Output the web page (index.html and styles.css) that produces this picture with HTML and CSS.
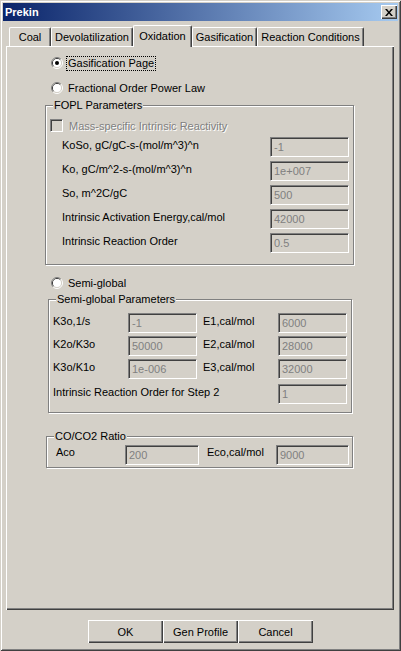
FILE: index.html
```html
<!DOCTYPE html>
<html>
<head>
<meta charset="utf-8">
<link rel="stylesheet" href="styles.css">
</head>
<body>
<div class="window">
  <div class="titlebar">
    <span class="title">Prekin</span>
    <span class="close"><svg width="8" height="7" viewBox="0 0 8 7"><path d="M0 0h2l2 2.4 2-2.4h2L5 3.5 8 7H6L4 4.6 2 7H0l3-3.5z" fill="#000"/></svg></span>
  </div>
  <div class="tabs">
    <div class="tab w-coal">Coal</div>
    <div class="tab w-devol">Devolatilization</div>
    <div class="tab active w-oxid">Oxidation</div>
    <div class="tab w-gasif">Gasification</div>
    <div class="tab w-react">Reaction Conditions</div>
  </div>
  <div class="panel">
    <div class="radio-row">
      <svg class="radio" width="12" height="12" viewBox="0 0 12 12">
        <path d="M2.11 9.89A5.5 5.5 0 0 1 9.89 2.11" fill="none" stroke="#808080"/>
        <path d="M9.89 2.11A5.5 5.5 0 0 1 2.11 9.89" fill="none" stroke="#fff"/>
        <path d="M2.82 9.18A4.5 4.5 0 0 1 9.18 2.82" fill="none" stroke="#404040"/>
        <path d="M9.18 2.82A4.5 4.5 0 0 1 2.82 9.18" fill="none" stroke="#D4D0C8"/>
        <circle cx="6" cy="6" r="4" fill="#fff"/>
        <circle cx="6" cy="6" r="2" fill="#000"/>
      </svg>
      <span class="rlabel focus">Gasification Page</span>
    </div>
    <div class="radio-row gap9">
      <svg class="radio" width="12" height="12" viewBox="0 0 12 12">
        <path d="M2.11 9.89A5.5 5.5 0 0 1 9.89 2.11" fill="none" stroke="#808080"/>
        <path d="M9.89 2.11A5.5 5.5 0 0 1 2.11 9.89" fill="none" stroke="#fff"/>
        <path d="M2.82 9.18A4.5 4.5 0 0 1 9.18 2.82" fill="none" stroke="#404040"/>
        <path d="M9.18 2.82A4.5 4.5 0 0 1 2.82 9.18" fill="none" stroke="#D4D0C8"/>
        <circle cx="6" cy="6" r="4" fill="#fff"/>
      </svg>
      <span class="rlabel">Fractional Order Power Law</span>
    </div>

    <div class="group fopl">
      <span class="gtitle">FOPL Parameters</span>
      <div class="check-row">
        <span class="checkbox"></span>
        <span class="disabled-text">Mass-specific Intrinsic Reactivity</span>
      </div>
      <div class="prow first"><span class="plabel">KoSo, gC/gC-s-(mol/m^3)^n</span><span class="field fw79">-1</span></div>
      <div class="prow"><span class="plabel">Ko, gC/m^2-s-(mol/m^3)^n</span><span class="field fw79">1e+007</span></div>
      <div class="prow"><span class="plabel">So, m^2C/gC</span><span class="field fw79">500</span></div>
      <div class="prow"><span class="plabel">Intrinsic Activation Energy,cal/mol</span><span class="field fw79">42000</span></div>
      <div class="prow"><span class="plabel">Intrinsic Reaction Order</span><span class="field fw79">0.5</span></div>
    </div>

    <div class="radio-row gap10">
      <svg class="radio" width="12" height="12" viewBox="0 0 12 12">
        <path d="M2.11 9.89A5.5 5.5 0 0 1 9.89 2.11" fill="none" stroke="#808080"/>
        <path d="M9.89 2.11A5.5 5.5 0 0 1 2.11 9.89" fill="none" stroke="#fff"/>
        <path d="M2.82 9.18A4.5 4.5 0 0 1 9.18 2.82" fill="none" stroke="#404040"/>
        <path d="M9.18 2.82A4.5 4.5 0 0 1 2.82 9.18" fill="none" stroke="#D4D0C8"/>
        <circle cx="6" cy="6" r="4" fill="#fff"/>
      </svg>
      <span class="rlabel">Semi-global</span>
    </div>

    <div class="group semi">
      <span class="gtitle">Semi-global Parameters</span>
      <div class="srow">
        <span class="slabel">K3o,1/s</span><span class="field fw69">-1</span>
        <span class="slabel second">E1,cal/mol</span><span class="field fw69">6000</span>
      </div>
      <div class="srow g3">
        <span class="slabel">K2o/K3o</span><span class="field fw69">50000</span>
        <span class="slabel second">E2,cal/mol</span><span class="field fw69">28000</span>
      </div>
      <div class="srow g3">
        <span class="slabel">K3o/K1o</span><span class="field fw69">1e-006</span>
        <span class="slabel second">E3,cal/mol</span><span class="field fw69">32000</span>
      </div>
      <div class="srow g5">
        <span class="slabel wide">Intrinsic Reaction Order for Step 2</span><span class="field fw69">1</span>
      </div>
    </div>

    <div class="group co">
      <span class="gtitle">CO/CO2 Ratio</span>
      <div class="crow">
        <span class="clabel">Aco</span><span class="field fw74">200</span>
        <span class="clabel second">Eco,cal/mol</span><span class="field fw73">9000</span>
      </div>
    </div>
  </div>
  <div class="buttons">
    <div class="btn">OK</div>
    <div class="btn">Gen Profile</div>
    <div class="btn">Cancel</div>
  </div>
</div>
</body>
</html>
```
FILE: styles.css
```css
html, body {
  margin: 0;
  padding: 0;
  background: #D4D0C8;
}
body {
  font-family: "Liberation Sans", Arial, sans-serif;
  font-size: 11px;
  color: #000;
}
.window {
  width: 401px;
  height: 651px;
  box-sizing: border-box;
  padding: 3px;
  background: #D4D0C8;
  box-shadow: inset 1px 1px 0 #D4D0C8, inset -1px -1px 0 #404040, inset 2px 2px 0 #fff, inset -2px -2px 0 #808080;
}
.titlebar {
  height: 18px;
  display: flex;
  align-items: center;
  justify-content: space-between;
  padding-left: 2px;
  background: linear-gradient(to right, #0A246A, #A6CAF0);
}
.title {
  color: #fff;
  font-weight: bold;
  font-size: 11px;
}
.close {
  width: 16px;
  height: 14px;
  margin-right: 1px;
  box-sizing: border-box;
  background: #D4D0C8;
  display: flex;
  align-items: center;
  justify-content: center;
  box-shadow: inset 1px 1px 0 #fff, inset -1px -1px 0 #404040, inset -2px -2px 0 #808080;
}
.close svg { display: block; }

.tabs {
  display: flex;
  height: 21px;
  margin-top: 4px;
  padding-left: 6px;
}
.tab {
  height: 19px;
  margin-top: 2px;
  box-sizing: border-box;
  border-top: 1px solid #fff;
  border-left: 1px solid #fff;
  border-right: 1px solid #404040;
  border-radius: 2px 2px 0 0;
  box-shadow: inset -1px 0 0 #808080;
  background: #D4D0C8;
  display: flex;
  align-items: center;
  justify-content: center;
  white-space: nowrap;
}
.tab.active {
  height: 22px;
  margin-top: 0;
  padding-bottom: 2px;
  position: relative;
  z-index: 1;
}
.w-coal { width: 42px; }
.w-devol { width: 82px; }
.w-oxid { width: 59px; }
.w-gasif { width: 65px; }
.w-react { width: 107px; }

.panel {
  margin-left: 3px;
  width: 388px;
  height: 564px;
  box-sizing: border-box;
  padding-top: 9px;
  display: flex;
  flex-direction: column;
  align-items: flex-start;
  box-shadow: inset 1px 1px 0 #fff, inset -1px -1px 0 #404040, inset -2px -2px 0 #808080;
}

.radio-row {
  display: flex;
  align-items: center;
  height: 16px;
  margin-left: 45px;
}
.radio-row.gap9 { margin-top: 9px; }
.radio-row.gap10 { margin-top: 10px; }
.radio { display: block; flex: none; }
.rlabel {
  margin-left: 3px;
  padding: 0 1px;
  line-height: 13px;
  border: 1px dotted transparent;
  white-space: nowrap;
}
.rlabel.focus { border-color: #000; }

.group {
  position: relative;
  box-sizing: border-box;
  border: 1px solid #808080;
  box-shadow: inset 1px 1px 0 #fff, 1px 1px 0 #fff;
}
.gtitle {
  position: absolute;
  top: -8px;
  left: 7px;
  padding: 0 1px;
  line-height: 14px;
  background: #D4D0C8;
  white-space: nowrap;
}
.fopl {
  margin-top: 9px;
  margin-left: 39px;
  width: 309px;
  height: 160px;
  padding-top: 13px;
}
.semi {
  margin-top: 8px;
  margin-left: 42px;
  width: 304px;
  height: 114px;
  padding-top: 13px;
}
.co {
  margin-top: 23px;
  margin-left: 40px;
  width: 307px;
  height: 32px;
  padding-top: 8px;
}

.check-row {
  display: flex;
  align-items: center;
  height: 13px;
  margin-left: 4px;
}
.checkbox {
  width: 13px;
  height: 13px;
  flex: none;
  box-sizing: border-box;
  border: 1px solid;
  border-color: #808080 #fff #fff #808080;
  box-shadow: inset 1px 1px 0 #404040;
  background: #D4D0C8;
  margin-right: 6px;
}
.disabled-text {
  color: #808080;
  text-shadow: 1px 1px 0 #fff;
  white-space: nowrap;
}

.field {
  box-sizing: border-box;
  height: 20px;
  flex: none;
  border: 1px solid;
  border-color: #808080 #fff #fff #808080;
  box-shadow: inset 1px 1px 0 #404040;
  background: #D4D0C8;
  color: #808080;
  padding-left: 3px;
  line-height: 18px;
  white-space: nowrap;
}
.fw79 { width: 79px; }
.fw69 { width: 69px; }
.fw74 { width: 74px; }
.fw73 { width: 73px; }

.prow {
  display: flex;
  height: 20px;
  margin-left: 16px;
  margin-top: 4px;
}
.prow.first { margin-top: 5px; }
.plabel {
  width: 208px;
  padding-top: 1px;
  line-height: 14px;
  white-space: nowrap;
}

.srow {
  display: flex;
  height: 20px;
  margin-left: 4px;
}
.srow.g3 { margin-top: 3px; }
.srow.g5 { margin-top: 5px; }
.slabel {
  width: 75px;
  padding-top: 1px;
  line-height: 14px;
  white-space: nowrap;
}
.slabel.second { margin-left: 6px; }
.slabel.wide { width: 225px; }

.crow {
  display: flex;
  height: 20px;
  margin-left: 9px;
}
.clabel {
  width: 69px;
  line-height: 14px;
  white-space: nowrap;
}
.clabel.second { margin-left: 8px; }

.buttons {
  display: flex;
  justify-content: center;
  margin-top: 10px;
}
.btn {
  width: 75px;
  height: 23px;
  box-sizing: border-box;
  display: flex;
  align-items: center;
  justify-content: center;
  box-shadow: inset 1px 1px 0 #fff, inset -1px -1px 0 #404040, inset -2px -2px 0 #808080;
}
```
